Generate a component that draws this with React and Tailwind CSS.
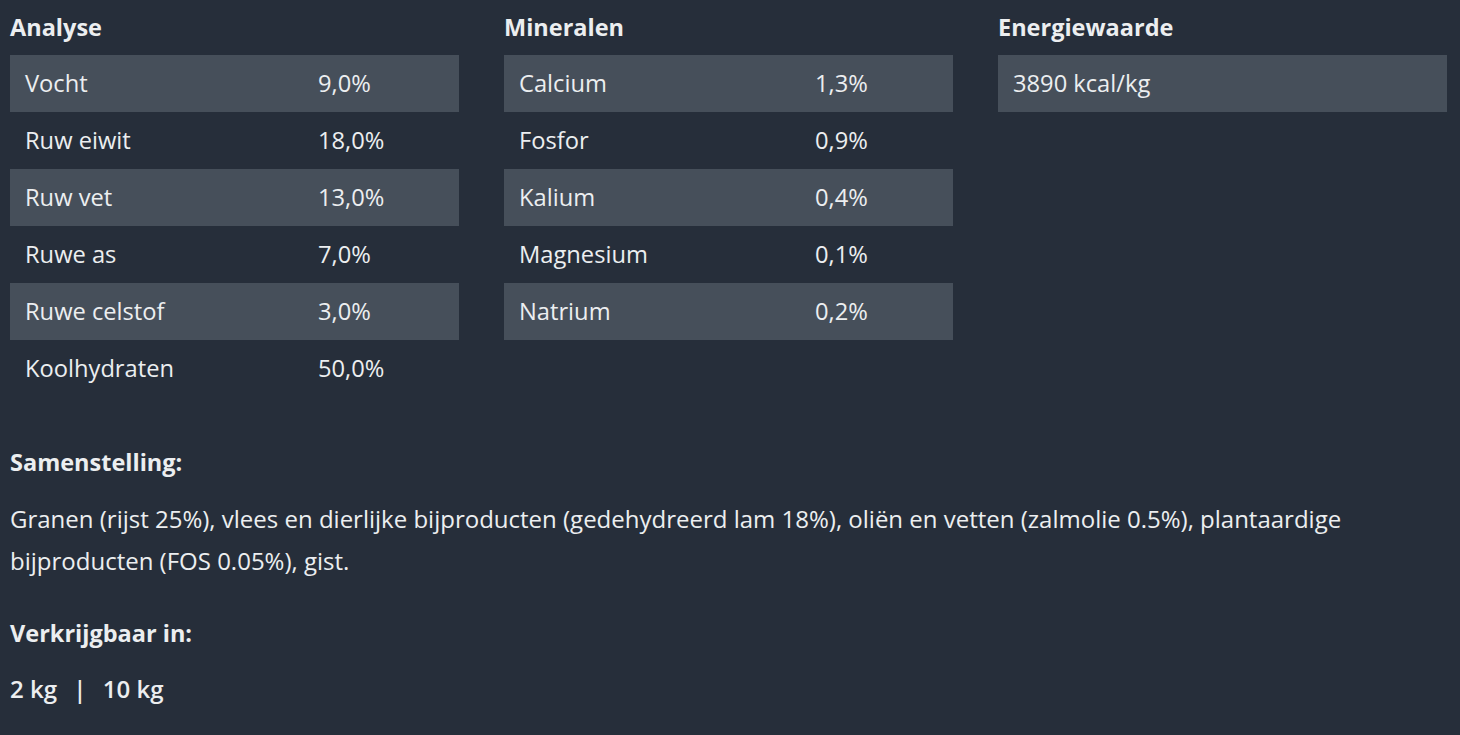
const analyse = [
  ["Vocht", "9,0%"],
  ["Ruw eiwit", "18,0%"],
  ["Ruw vet", "13,0%"],
  ["Ruwe as", "7,0%"],
  ["Ruwe celstof", "3,0%"],
  ["Koolhydraten", "50,0%"],
]

const mineralen = [
  ["Calcium", "1,3%"],
  ["Fosfor", "0,9%"],
  ["Kalium", "0,4%"],
  ["Magnesium", "0,1%"],
  ["Natrium", "0,2%"],
]

const Table = ({ title, rows, labelWidth }) => (
  <div className="flex flex-col">
    <h3 className="text-[23.5px] font-bold leading-[28px] mt-[13px] mb-[14px]">{title}</h3>
    <div className="text-[23.7px]">
      {rows.map(([label, value], i) => (
        <div
          key={label}
          className={`flex items-center h-[57px] px-[15px] ${i % 2 === 0 ? "bg-[#464f5a]" : ""}`}
        >
          <span className={labelWidth}>{label}</span>
          {value && <span>{value}</span>}
        </div>
      ))}
    </div>
  </div>
)

export default function App() {
  return (
    <div
      className="min-h-screen bg-[#262e3a] text-[#eceef0] pl-[10px] pr-[13px] pb-8 text-[24px]"
      style={{ fontFamily: '"Open Sans", sans-serif' }}
    >
      <div className="grid grid-cols-3 gap-[45px]">
        <Table title="Analyse" rows={analyse} labelWidth="w-[293px]" />
        <Table title="Mineralen" rows={mineralen} labelWidth="w-[296px]" />
        <Table title="Energiewaarde" rows={[["3890 kcal/kg", ""]]} labelWidth="" />
      </div>

      <h4 className="text-[23.5px] font-bold leading-[28px] mt-[51px]">Samenstelling:</h4>
      <p className="leading-[42px] mt-[22px]">
        Granen (rijst 25%), vlees en dierlijke bijproducten (gedehydreerd lam 18%), oliën en vetten (zalmolie 0.5%), plantaardige bijproducten (FOS 0.05%), gist.
      </p>

      <h4 className="text-[23.5px] font-bold leading-[28px] mt-[37px]">Verkrijgbaar in:</h4>
      <p className="font-semibold leading-[42px] mt-[21px]">
        2 kg <span className="mx-[10px]">|</span> 10 kg
      </p>
    </div>
  )
}
